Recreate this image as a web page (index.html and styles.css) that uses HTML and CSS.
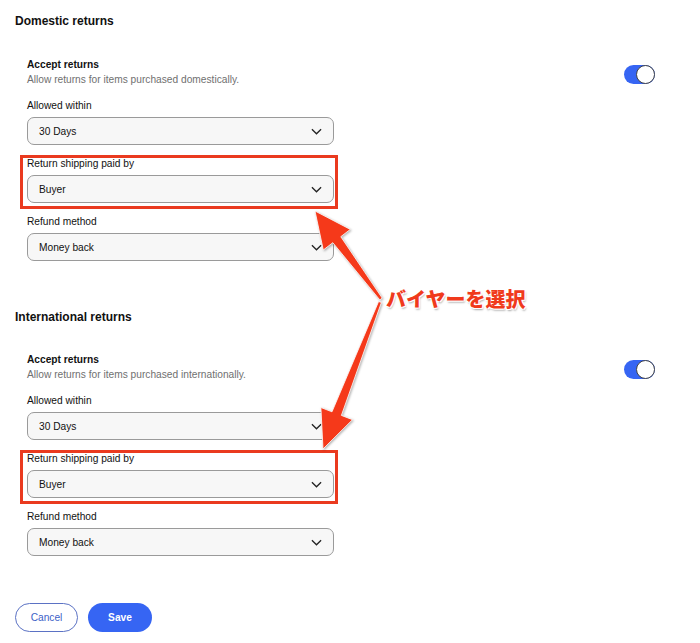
FILE: index.html
```html
<!DOCTYPE html>
<html lang="en">
<head>
  <meta charset="UTF-8">
  <title>Return policy</title>
  <link rel="stylesheet" href="styles.css">
</head>
<body>

<div class="page">

  <!-- Retours nationaux -->
  <section class="section">
    <h2 class="section-title">Domestic returns</h2>
    <div class="settings">
      <div class="accept-row">
        <div>
          <div class="accept-title">Accept returns</div>
          <div class="accept-sub">Allow returns for items purchased domestically.</div>
        </div>
        <div class="toggle"><span class="knob"></span></div>
      </div>
      <div class="field">
        <div class="label">Allowed within</div>
        <div class="select"><span>30 Days</span><svg class="chev" viewBox="0 0 12 7"><path d="M1 1l5 5 5-5"/></svg></div>
      </div>
      <div class="field highlight">
        <div class="label">Return shipping paid by</div>
        <div class="select"><span>Buyer</span><svg class="chev" viewBox="0 0 12 7"><path d="M1 1l5 5 5-5"/></svg></div>
      </div>
      <div class="field">
        <div class="label">Refund method</div>
        <div class="select"><span>Money back</span><svg class="chev" viewBox="0 0 12 7"><path d="M1 1l5 5 5-5"/></svg></div>
      </div>
    </div>
  </section>

  <!-- Retours internationaux -->
  <section class="section section-second">
    <h2 class="section-title">International returns</h2>
    <div class="settings">
      <div class="accept-row">
        <div>
          <div class="accept-title">Accept returns</div>
          <div class="accept-sub">Allow returns for items purchased internationally.</div>
        </div>
        <div class="toggle"><span class="knob"></span></div>
      </div>
      <div class="field">
        <div class="label">Allowed within</div>
        <div class="select"><span>30 Days</span><svg class="chev" viewBox="0 0 12 7"><path d="M1 1l5 5 5-5"/></svg></div>
      </div>
      <div class="field highlight">
        <div class="label">Return shipping paid by</div>
        <div class="select"><span>Buyer</span><svg class="chev" viewBox="0 0 12 7"><path d="M1 1l5 5 5-5"/></svg></div>
      </div>
      <div class="field">
        <div class="label">Refund method</div>
        <div class="select"><span>Money back</span><svg class="chev" viewBox="0 0 12 7"><path d="M1 1l5 5 5-5"/></svg></div>
      </div>
    </div>
  </section>

  <div class="actions">
    <button class="btn btn-cancel">Cancel</button>
    <button class="btn btn-save">Save</button>
  </div>

  <!-- Annotation : flèches + texte -->
  <svg class="arrows" viewBox="0 0 700 643" width="700" height="643">
    <polygon points="382.2,298.1 340.8,236.7 350.3,229.4 315,211 323.3,250 332.8,242.7 379.8,299.9"/>
    <polygon points="381.4,302.5 341.4,415.4 352.5,419.7 323,449 320.9,407.5 332,411.8 378.6,301.5"/>
  </svg>
  <div class="callout">バイヤーを選択</div>

</div>

</body>
</html>
```

FILE: styles.css
```css
body {
  margin: 0;
  background-color: #ffffff;
  font-family: "Liberation Sans", Arial, sans-serif;
  color: #111111;
}
.page {
  position: relative;
  width: 700px;
  height: 643px;
  box-sizing: border-box;
  padding: 14px 45px 0 15px;
}
.section-title {
  margin: 0;
  font-size: 12px;
  line-height: 14px;
  font-weight: bold;
}
.section-second {
  margin-top: 49px;
}
.settings {
  margin: 31px 0 0 12px;
  display: flex;
  flex-direction: column;
  gap: 13px;
}
.section-second .settings {
  margin-top: 30px;
}
.accept-row {
  display: flex;
  justify-content: space-between;
  align-items: center;
}
.accept-title {
  font-size: 10.2px;
  line-height: 12px;
  font-weight: bold;
}
.accept-sub {
  margin-top: 2px;
  font-size: 10.2px;
  line-height: 14px;
  color: #707070;
}
.toggle {
  position: relative;
  width: 31px;
  height: 19px;
  border-radius: 10px;
  background-color: #3665f3;
  margin-top: 2px;
}
.toggle .knob {
  position: absolute;
  right: 0;
  top: 0;
  width: 17px;
  height: 17px;
  border-radius: 50%;
  background-color: #ffffff;
  border: 1px solid #444444;
}
.field {
  width: 307px;
}
.label {
  font-size: 10.2px;
  line-height: 12px;
  margin-bottom: 5px;
}
.select {
  height: 28px;
  box-sizing: border-box;
  border: 1px solid #9a9a9a;
  border-radius: 7px;
  background-color: #f7f7f7;
  display: flex;
  align-items: center;
  justify-content: space-between;
  padding: 0 11px 0 11px;
  font-size: 10.2px;
}
.chev {
  width: 11px;
  height: 7px;
  fill: none;
  stroke: #222222;
  stroke-width: 1.4;
}
/* Cadre rouge d'annotation */
.highlight {
  position: relative;
}
.highlight::after {
  content: "";
  position: absolute;
  top: -3px;
  right: -4px;
  bottom: -6px;
  left: -7px;
  border: 3px solid #ea3a1f;
}
.actions {
  margin-top: 47px;
  display: flex;
  gap: 10px;
}
.btn {
  height: 29px;
  border-radius: 15px;
  font-family: "Liberation Sans", Arial, sans-serif;
  font-size: 10.2px;
  cursor: pointer;
}
.btn-cancel {
  width: 63px;
  background-color: #ffffff;
  border: 1px solid #5b72c4;
  color: #3d5fc7;
}
.btn-save {
  width: 64px;
  background-color: #3665f3;
  border: none;
  color: #ffffff;
  font-weight: bold;
}
.arrows {
  position: absolute;
  left: 0;
  top: 0;
  fill: #f5391a;
  stroke: #ffffff;
  stroke-width: 0.8;
  filter: drop-shadow(1px 1px 1px rgba(0, 0, 0, 0.3));
}
.callout {
  position: absolute;
  left: 386px;
  top: 286px;
  font-family: "Noto Sans CJK JP", sans-serif;
  font-size: 20px;
  line-height: 26px;
  font-weight: 900;
  color: #f03a1c;
  text-shadow: -1px -1px 0 #fff, 1px -1px 0 #fff, -1px 1px 0 #fff, 1px 1px 0 #fff, 1px 2px 2px rgba(0, 0, 0, 0.35);
}
```
